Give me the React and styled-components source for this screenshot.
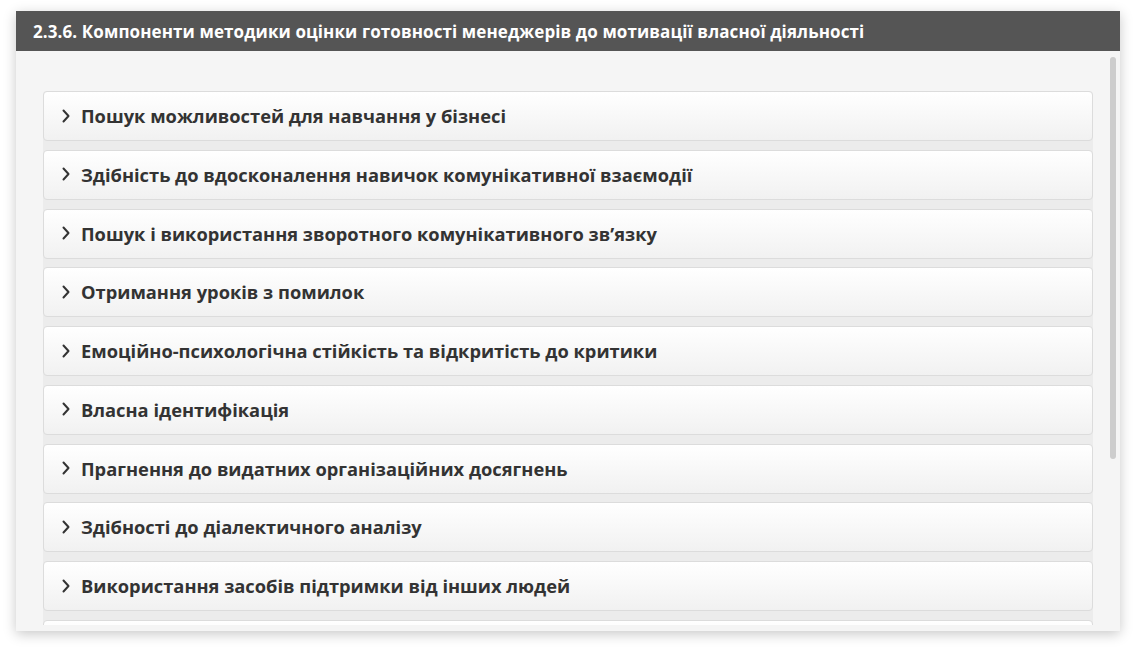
import React from "react";
import styled, { createGlobalStyle } from "styled-components";

const Global = createGlobalStyle`
  html, body { margin: 0; padding: 0; background: #fff; }
  body { font-family: "Open Sans", "Noto Sans", sans-serif; }
`;

const Page = styled.div`
  padding: 11px 16px 22px 16px;
`;

const Panel = styled.section`
  width: 1104px;
  height: 620px;
  display: flex;
  flex-direction: column;
  background: #f5f5f5;
  box-shadow: 0 3px 12px rgba(0, 0, 0, 0.22);
`;

const Header = styled.h2`
  margin: 0;
  height: 40px;
  flex: none;
  display: flex;
  align-items: center;
  padding: 0 17px;
  background: #555555;
  color: #fff;
  font-size: 17px;
  font-weight: 700;
  letter-spacing: 0.1px;
  white-space: nowrap;
`;

const Body = styled.div`
  position: relative;
  flex: 1;
  min-height: 0;
  padding: 6px 0;
  display: flex;
`;

const Scroller = styled.div`
  flex: 1;
  overflow: hidden;
  padding: 34px 27px 10px 27px;
`;

/* custom scrollbar thumb drawn over the list */
const Thumb = styled.div`
  position: absolute;
  top: 6px;
  right: 4px;
  width: 6px;
  height: 402px;
  border-radius: 3px;
  background: #cdcdcd;
`;

const List = styled.div`
  display: flex;
  flex-direction: column;
  gap: 8.75px;
  background: #ececec;
  border-radius: 4px;
`;

const Item = styled.button`
  height: 50px;
  flex: none;
  display: flex;
  align-items: center;
  gap: 11px;
  padding: 0 0 1px 18px;
  border: 1px solid #dcdcdc;
  border-radius: 4px;
  background: linear-gradient(#ffffff, #f1f1f1);
  font-family: inherit;
  font-size: 18.3px;
  font-weight: 700;
  color: #333333;
  text-align: left;
  cursor: pointer;
`;

const Chevron = () => (
  <svg width="8" height="14" viewBox="0 0 8 14" fill="none">
    <path d="M1.5 1.5 L6.5 7 L1.5 12.5" stroke="#333" strokeWidth="2" strokeLinecap="round" strokeLinejoin="round" />
  </svg>
);

const items = [
  "Пошук можливостей для навчання у бізнесі",
  "Здібність до вдосконалення навичок комунікативної взаємодії",
  "Пошук і використання зворотного комунікативного зв’язку",
  "Отримання уроків з помилок",
  "Емоційно-психологічна стійкість та відкритість до критики",
  "Власна ідентифікація",
  "Прагнення до видатних організаційних досягнень",
  "Здібності до діалектичного аналізу",
  "Використання засобів підтримки від інших людей",
  "Прагнення до самовдосконалення",
  "Здатність до рефлексії",
  "Відповідальність за результати діяльності",
  "Орієнтація на успіх",
];

export default function App() {
  return (
    <Page>
      <Global />
      <Panel>
        <Header>2.3.6. Компоненти методики оцінки готовності менеджерів до мотивації власної діяльності</Header>
        <Body>
          <Scroller>
            <List>
              {items.map((text, id) => (
                <Item key={id}>
                  <Chevron />
                  {text}
                </Item>
              ))}
            </List>
          </Scroller>
          <Thumb />
        </Body>
      </Panel>
    </Page>
  );
}
